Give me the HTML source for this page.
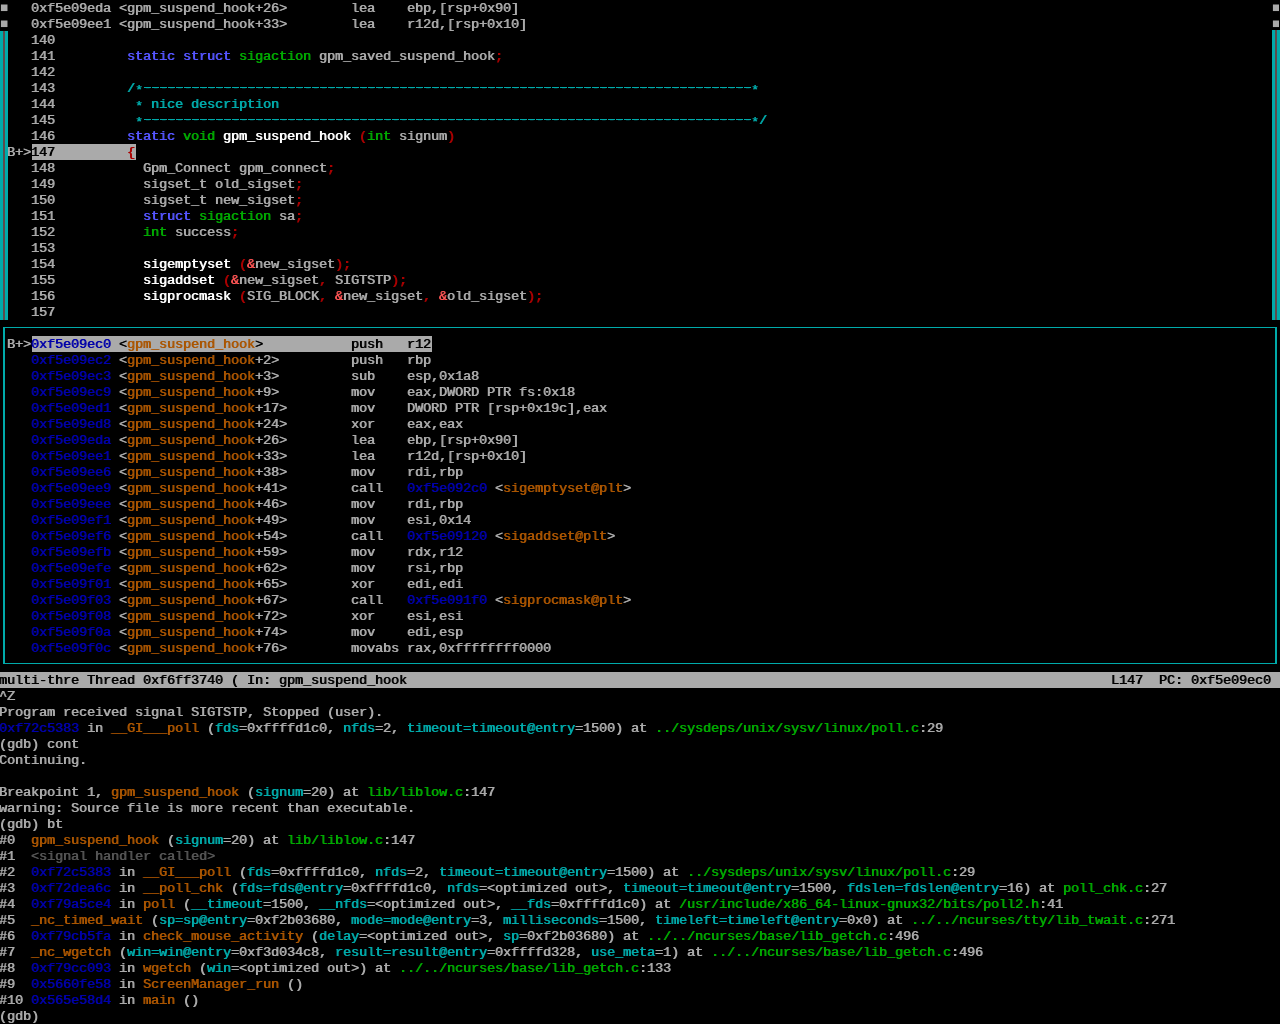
<!DOCTYPE html>
<html lang="en"><head><meta charset="utf-8"><title>gdb tui</title>
<style>
html,body{margin:0;padding:0;background:#000;}
body{width:1280px;height:1024px;overflow:hidden;position:relative;}
#t{position:absolute;left:0;top:0;width:1280px;height:1024px;color:#aaa;will-change:opacity;
 font-family:"Liberation Mono",monospace;font-size:13.5px;letter-spacing:-0.10132px;line-height:18px;white-space:pre;text-shadow:-0.6px 0 0 currentColor;
 font-variant-ligatures:none;}
.l{position:absolute;left:-0.6px;height:16px;width:1280px;overflow:hidden;}
.l>span,.l>span>span{display:inline-block;height:16px;vertical-align:top;}
.b{color:#0000aa}.o{color:#aa5500}.c{color:#00aaaa}.g{color:#00aa00}.r{color:#aa0000}
.R{color:#ff5555}.B{color:#5555ff}.w{color:#fff}.d{color:#555}
.H{color:#000}.S{color:#000}
.hl{position:absolute;height:16px;background:#aaa}
.D{color:#00aaaa;background:linear-gradient(90deg,#00aaaa 7px,transparent 7px) 0 8px/8px 1px repeat-x;position:relative;top:-1px;left:0.6px}
.a{color:#00aaaa;position:relative;top:2px}
.q{color:#aaa;text-shadow:none;width:8px;overflow:hidden;position:relative;top:-0.4px;left:0.6px}
.bar{position:absolute;width:8px;top:31px;height:289px;background:#00aaaa;}
.bar i{position:absolute;left:3px;width:2px;top:0;bottom:0;background:#5c4c4c;}
#box{position:absolute;left:3px;top:327px;width:1270px;height:335px;border:solid #00aaaa;border-width:1px 2px;}
</style></head>
<body><div id="t">
<div class="hl" style="left:32px;top:144px;width:104px"></div><div class="hl" style="left:32px;top:336px;width:400px"></div><div class="hl" style="left:0;top:672px;width:1280px"></div>
<div class="l" style="top:0px"><span class="q">■</span>   0xf5e09eda &lt;gpm_suspend_hook+26&gt;        lea    ebp,[rsp+0x90]                                                                                              <span class="q">■</span></div>
<div class="l" style="top:16px"><span class="q">■</span>   0xf5e09ee1 &lt;gpm_suspend_hook+33&gt;        lea    r12d,[rsp+0x10]                                                                                             <span class="q">■</span></div>
<div class="l" style="top:32px">    140</div>
<div class="l" style="top:48px">    141         <span class="B">static</span> <span class="B">struct</span> <span class="g">sigaction</span> gpm_saved_suspend_hook<span class="r">;</span></div>
<div class="l" style="top:64px">    142</div>
<div class="l" style="top:80px">    143         <span class="c">/</span><span class="a">*</span><span class="D">----------------------------------------------------------------------------</span><span class="a">*</span></div>
<div class="l" style="top:96px">    144          <span class="a">*</span><span class="c"> nice description</span></div>
<div class="l" style="top:112px">    145          <span class="a">*</span><span class="D">----------------------------------------------------------------------------</span><span class="a">*</span><span class="c">/</span></div>
<div class="l" style="top:128px">    146         <span class="B">static</span> <span class="g">void</span> <span class="w">gpm_suspend_hook</span> <span class="r">(</span><span class="g">int</span> signum<span class="r">)</span></div>
<div class="l" style="top:144px"> B+&gt;<span class="H">147         <span class="r">{</span></span></div>
<div class="l" style="top:160px">    148           Gpm_Connect gpm_connect<span class="r">;</span></div>
<div class="l" style="top:176px">    149           sigset_t old_sigset<span class="r">;</span></div>
<div class="l" style="top:192px">    150           sigset_t new_sigset<span class="r">;</span></div>
<div class="l" style="top:208px">    151           <span class="B">struct</span> <span class="g">sigaction</span> sa<span class="r">;</span></div>
<div class="l" style="top:224px">    152           <span class="g">int</span> success<span class="r">;</span></div>
<div class="l" style="top:240px">    153</div>
<div class="l" style="top:256px">    154           <span class="w">sigemptyset</span> <span class="r">(</span><span class="R">&amp;</span>new_sigset<span class="r">);</span></div>
<div class="l" style="top:272px">    155           <span class="w">sigaddset</span> <span class="r">(</span><span class="R">&amp;</span>new_sigset<span class="r">,</span> SIGTSTP<span class="r">);</span></div>
<div class="l" style="top:288px">    156           <span class="w">sigprocmask</span> <span class="r">(</span>SIG_BLOCK<span class="r">,</span> <span class="R">&amp;</span>new_sigset<span class="r">,</span> <span class="R">&amp;</span>old_sigset<span class="r">);</span></div>
<div class="l" style="top:304px">    157</div>
<div class="l" style="top:336px"> B+&gt;<span class="H"><span class="b">0xf5e09ec0</span> &lt;<span class="o">gpm_suspend_hook</span>&gt;           push   r12</span></div>
<div class="l" style="top:352px">    <span class="b">0xf5e09ec2</span> &lt;<span class="o">gpm_suspend_hook</span>+2&gt;         push   rbp</div>
<div class="l" style="top:368px">    <span class="b">0xf5e09ec3</span> &lt;<span class="o">gpm_suspend_hook</span>+3&gt;         sub    esp,0x1a8</div>
<div class="l" style="top:384px">    <span class="b">0xf5e09ec9</span> &lt;<span class="o">gpm_suspend_hook</span>+9&gt;         mov    eax,DWORD PTR fs:0x18</div>
<div class="l" style="top:400px">    <span class="b">0xf5e09ed1</span> &lt;<span class="o">gpm_suspend_hook</span>+17&gt;        mov    DWORD PTR [rsp+0x19c],eax</div>
<div class="l" style="top:416px">    <span class="b">0xf5e09ed8</span> &lt;<span class="o">gpm_suspend_hook</span>+24&gt;        xor    eax,eax</div>
<div class="l" style="top:432px">    <span class="b">0xf5e09eda</span> &lt;<span class="o">gpm_suspend_hook</span>+26&gt;        lea    ebp,[rsp+0x90]</div>
<div class="l" style="top:448px">    <span class="b">0xf5e09ee1</span> &lt;<span class="o">gpm_suspend_hook</span>+33&gt;        lea    r12d,[rsp+0x10]</div>
<div class="l" style="top:464px">    <span class="b">0xf5e09ee6</span> &lt;<span class="o">gpm_suspend_hook</span>+38&gt;        mov    rdi,rbp</div>
<div class="l" style="top:480px">    <span class="b">0xf5e09ee9</span> &lt;<span class="o">gpm_suspend_hook</span>+41&gt;        call   <span class="b">0xf5e092c0</span> &lt;<span class="o">sigemptyset@plt</span>&gt;</div>
<div class="l" style="top:496px">    <span class="b">0xf5e09eee</span> &lt;<span class="o">gpm_suspend_hook</span>+46&gt;        mov    rdi,rbp</div>
<div class="l" style="top:512px">    <span class="b">0xf5e09ef1</span> &lt;<span class="o">gpm_suspend_hook</span>+49&gt;        mov    esi,0x14</div>
<div class="l" style="top:528px">    <span class="b">0xf5e09ef6</span> &lt;<span class="o">gpm_suspend_hook</span>+54&gt;        call   <span class="b">0xf5e09120</span> &lt;<span class="o">sigaddset@plt</span>&gt;</div>
<div class="l" style="top:544px">    <span class="b">0xf5e09efb</span> &lt;<span class="o">gpm_suspend_hook</span>+59&gt;        mov    rdx,r12</div>
<div class="l" style="top:560px">    <span class="b">0xf5e09efe</span> &lt;<span class="o">gpm_suspend_hook</span>+62&gt;        mov    rsi,rbp</div>
<div class="l" style="top:576px">    <span class="b">0xf5e09f01</span> &lt;<span class="o">gpm_suspend_hook</span>+65&gt;        xor    edi,edi</div>
<div class="l" style="top:592px">    <span class="b">0xf5e09f03</span> &lt;<span class="o">gpm_suspend_hook</span>+67&gt;        call   <span class="b">0xf5e091f0</span> &lt;<span class="o">sigprocmask@plt</span>&gt;</div>
<div class="l" style="top:608px">    <span class="b">0xf5e09f08</span> &lt;<span class="o">gpm_suspend_hook</span>+72&gt;        xor    esi,esi</div>
<div class="l" style="top:624px">    <span class="b">0xf5e09f0a</span> &lt;<span class="o">gpm_suspend_hook</span>+74&gt;        mov    edi,esp</div>
<div class="l" style="top:640px">    <span class="b">0xf5e09f0c</span> &lt;<span class="o">gpm_suspend_hook</span>+76&gt;        movabs rax,0xffffffff0000</div>
<div class="l" style="top:672px"><span class="S">multi-thre Thread 0xf6ff3740 ( In: gpm_suspend_hook                                                                                        L147  PC: 0xf5e09ec0 </span></div>
<div class="l" style="top:688px">^Z</div>
<div class="l" style="top:704px">Program received signal SIGTSTP, Stopped (user).</div>
<div class="l" style="top:720px"><span class="b">0xf72c5383</span> in <span class="o">__GI___poll</span> (<span class="c">fds</span>=0xffffd1c0, <span class="c">nfds</span>=2, <span class="c">timeout=timeout@entry</span>=1500) at <span class="g">../sysdeps/unix/sysv/linux/poll.c</span>:29</div>
<div class="l" style="top:736px">(gdb) cont</div>
<div class="l" style="top:752px">Continuing.</div>
<div class="l" style="top:784px">Breakpoint 1, <span class="o">gpm_suspend_hook</span> (<span class="c">signum</span>=20) at <span class="g">lib/liblow.c</span>:147</div>
<div class="l" style="top:800px">warning: Source file is more recent than executable.</div>
<div class="l" style="top:816px">(gdb) bt</div>
<div class="l" style="top:832px">#0  <span class="o">gpm_suspend_hook</span> (<span class="c">signum</span>=20) at <span class="g">lib/liblow.c</span>:147</div>
<div class="l" style="top:848px">#1  <span class="d">&lt;signal handler called&gt;</span></div>
<div class="l" style="top:864px">#2  <span class="b">0xf72c5383</span> in <span class="o">__GI___poll</span> (<span class="c">fds</span>=0xffffd1c0, <span class="c">nfds</span>=2, <span class="c">timeout=timeout@entry</span>=1500) at <span class="g">../sysdeps/unix/sysv/linux/poll.c</span>:29</div>
<div class="l" style="top:880px">#3  <span class="b">0xf72dea6c</span> in <span class="o">__poll_chk</span> (<span class="c">fds=fds@entry</span>=0xffffd1c0, <span class="c">nfds</span>=&lt;optimized out&gt;, <span class="c">timeout=timeout@entry</span>=1500, <span class="c">fdslen=fdslen@entry</span>=16) at <span class="g">poll_chk.c</span>:27</div>
<div class="l" style="top:896px">#4  <span class="b">0xf79a5ce4</span> in <span class="o">poll</span> (<span class="c">__timeout</span>=1500, <span class="c">__nfds</span>=&lt;optimized out&gt;, <span class="c">__fds</span>=0xffffd1c0) at <span class="g">/usr/include/x86_64-linux-gnux32/bits/poll2.h</span>:41</div>
<div class="l" style="top:912px">#5  <span class="o">_nc_timed_wait</span> (<span class="c">sp=sp@entry</span>=0xf2b03680, <span class="c">mode=mode@entry</span>=3, <span class="c">milliseconds</span>=1500, <span class="c">timeleft=timeleft@entry</span>=0x0) at <span class="g">../../ncurses/tty/lib_twait.c</span>:271</div>
<div class="l" style="top:928px">#6  <span class="b">0xf79cb5fa</span> in <span class="o">check_mouse_activity</span> (<span class="c">delay</span>=&lt;optimized out&gt;, <span class="c">sp</span>=0xf2b03680) at <span class="g">../../ncurses/base/lib_getch.c</span>:496</div>
<div class="l" style="top:944px">#7  <span class="o">_nc_wgetch</span> (<span class="c">win=win@entry</span>=0xf3d034c8, <span class="c">result=result@entry</span>=0xffffd328, <span class="c">use_meta</span>=1) at <span class="g">../../ncurses/base/lib_getch.c</span>:496</div>
<div class="l" style="top:960px">#8  <span class="b">0xf79cc093</span> in <span class="o">wgetch</span> (<span class="c">win</span>=&lt;optimized out&gt;) at <span class="g">../../ncurses/base/lib_getch.c</span>:133</div>
<div class="l" style="top:976px">#9  <span class="b">0x5660fe58</span> in <span class="o">ScreenManager_run</span> ()</div>
<div class="l" style="top:992px">#10 <span class="b">0x565e58d4</span> in <span class="o">main</span> ()</div>
<div class="l" style="top:1008px">(gdb) </div>
<div class="bar" style="left:0"><i></i></div><div class="bar" style="left:1272px;top:30px;height:290px"><i></i></div>
<div id="box"></div>
</div></body></html>
